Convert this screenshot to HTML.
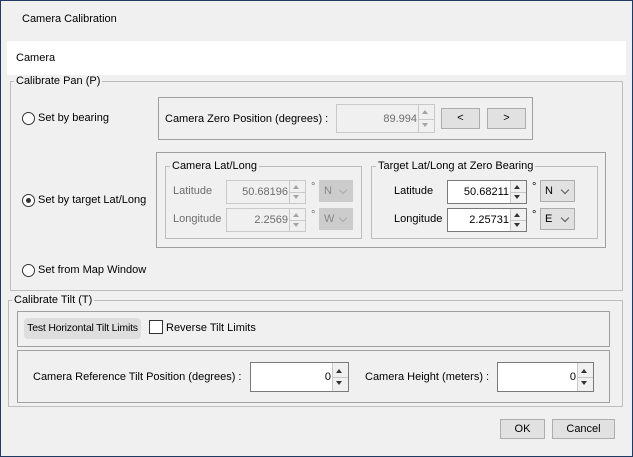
<!DOCTYPE html><html><head><style>
body{margin:0;width:633px;height:457px;background:#f0f0f0;font-family:"Liberation Sans",sans-serif;font-size:11px;color:#000;position:relative;overflow:hidden}
.a{position:absolute}
.b{position:absolute;border:1px solid #a0a0a0;box-sizing:border-box}
.g{position:absolute;border:1px solid #bdbdbd;box-sizing:border-box}
.lg{position:absolute;background:#f0f0f0;padding:0 2px;line-height:12px}
.t{position:absolute;line-height:13px;white-space:nowrap}
.sp{position:absolute;box-sizing:border-box;border:1px solid #7a7a7a;background:#fff;text-align:right}
.sp.d{border-color:#c8c8c8;background:#f0f0f0;color:#6d6d6d}
.sp .v{position:absolute;right:17px;top:0;bottom:0;display:flex;align-items:center}
.sp .ar{position:absolute;right:0;top:0;width:15px;bottom:0;border-left:1px solid #c8c8c8;background:#f0f0f0}
.ar i{position:absolute;left:3px;width:0;height:0;border-left:3px solid transparent;border-right:3px solid transparent}
.ar .u{top:27%;border-bottom:4px solid #333;margin-top:-2px}
.ar .dn{bottom:27%;border-top:4px solid #333;margin-bottom:-2px}
.sp.d .ar i{opacity:.4}
.ar .mid{position:absolute;left:0;right:0;top:50%;border-top:1px solid #c8c8c8}
.cb{position:absolute;box-sizing:border-box;border:1px solid #adadad;background:#e1e1e1;padding-left:4px;line-height:20px}
.cb.d{border-color:#ccc;background:#ccc;color:#888}
.cb:after{content:"";position:absolute;right:6px;top:6px;width:5px;height:5px;border-right:1px solid #555;border-bottom:1px solid #555;transform:rotate(45deg)}
.cb.d:after{border-color:#aaa}
.btn{position:absolute;box-sizing:border-box;border:1px solid #adadad;background:#e1e1e1;text-align:center}
.rd{position:absolute;width:13px;height:13px;border:1px solid #333;border-radius:50%;box-sizing:border-box;background:#fff}
</style></head><body>
<div class="a" style="inset:0;border:1px solid #1f3b63"></div>
<div class="t" style="left:22px;top:13px">Camera Calibration</div>
<div class="a" style="left:7px;top:41px;width:619px;height:34px;background:#fff"></div>
<div class="t" style="left:16px;top:52px">Camera</div>

<div class="g" style="left:10px;top:81px;width:613px;height:210px"></div>
<div class="lg" style="left:14px;top:75px">Calibrate Pan (P)</div>
<div class="rd" style="left:22px;top:112px"></div><div class="t" style="left:38px;top:112px">Set by bearing</div>
<div class="b" style="left:158px;top:97px;width:375px;height:43px"></div>
<div class="t" style="left:165px;top:113px">Camera Zero Position (degrees) :</div>
<div class="sp d" style="left:336px;top:104px;width:99px;height:29px"><span class="v">89.994</span><div class="ar"><i class="u"></i><div class="mid"></div><i class="dn"></i></div></div>
<div class="btn" style="left:441px;top:108px;width:39px;height:21px;line-height:19px">&lt;</div>
<div class="btn" style="left:487px;top:108px;width:39px;height:21px;line-height:19px">&gt;</div>

<div class="rd" style="left:22px;top:194px;border-color:#333"><div class="a" style="left:3px;top:3px;width:5px;height:5px;border-radius:50%;background:#333"></div></div>
<div class="t" style="left:38px;top:194px">Set by target Lat/Long</div>
<div class="b" style="left:156px;top:152px;width:450px;height:96px"></div>
<div class="g" style="left:165px;top:166px;width:197px;height:73px"></div>
<div class="lg" style="left:170px;top:160px">Camera Lat/Long</div>
<div class="t" style="left:173px;top:185px;color:#6d6d6d">Latitude</div>
<div class="sp d" style="left:226px;top:180px;width:80px;height:24px"><span class="v">50.68196</span><div class="ar"><i class="u"></i><div class="mid"></div><i class="dn"></i></div></div>
<div class="t" style="left:311px;top:181px;color:#6d6d6d">°</div>
<div class="cb d" style="left:319px;top:180px;width:34px;height:22px">N</div>
<div class="t" style="left:173px;top:213px;color:#6d6d6d">Longitude</div>
<div class="sp d" style="left:226px;top:208px;width:80px;height:24px"><span class="v">2.2569</span><div class="ar"><i class="u"></i><div class="mid"></div><i class="dn"></i></div></div>
<div class="t" style="left:311px;top:209px;color:#6d6d6d">°</div>
<div class="cb d" style="left:319px;top:208px;width:34px;height:22px">W</div>

<div class="g" style="left:371px;top:166px;width:227px;height:73px"></div>
<div class="lg" style="left:376px;top:160px">Target Lat/Long at Zero Bearing</div>
<div class="t" style="left:394px;top:185px">Latitude</div>
<div class="sp" style="left:447px;top:180px;width:80px;height:24px"><span class="v">50.68211</span><div class="ar"><i class="u"></i><div class="mid"></div><i class="dn"></i></div></div>
<div class="t" style="left:532px;top:181px">°</div>
<div class="cb" style="left:540px;top:180px;width:35px;height:22px">N</div>
<div class="t" style="left:394px;top:213px">Longitude</div>
<div class="sp" style="left:447px;top:208px;width:80px;height:24px"><span class="v">2.25731</span><div class="ar"><i class="u"></i><div class="mid"></div><i class="dn"></i></div></div>
<div class="t" style="left:532px;top:209px">°</div>
<div class="cb" style="left:540px;top:208px;width:35px;height:22px">E</div>

<div class="rd" style="left:22px;top:264px"></div><div class="t" style="left:38px;top:264px">Set from Map Window</div>

<div class="g" style="left:8px;top:300px;width:615px;height:107px"></div>
<div class="lg" style="left:12px;top:294px">Calibrate Tilt (T)</div>
<div class="b" style="left:17px;top:311px;width:593px;height:36px"></div>
<div class="a" style="left:24px;top:318px;width:117px;height:21px;background:#dedede;border-radius:4px;text-align:center;line-height:21px;white-space:nowrap;font-size:10.5px;letter-spacing:-0.2px">Test Horizontal Tilt Limits</div>
<div class="a" style="left:149px;top:320px;width:14px;height:14px;border:1px solid #333;box-sizing:border-box;background:#fff"></div>
<div class="t" style="left:166px;top:322px">Reverse Tilt Limits</div>
<div class="b" style="left:17px;top:350px;width:593px;height:53px"></div>
<div class="t" style="left:33px;top:371px">Camera Reference Tilt Position (degrees) :</div>
<div class="sp" style="left:250px;top:362px;width:99px;height:30px"><span class="v">0</span><div class="ar"><i class="u"></i><div class="mid"></div><i class="dn"></i></div></div>
<div class="t" style="left:365px;top:371px">Camera Height (meters) :</div>
<div class="sp" style="left:497px;top:362px;width:97px;height:30px"><span class="v">0</span><div class="ar"><i class="u"></i><div class="mid"></div><i class="dn"></i></div></div>

<div class="btn" style="left:500px;top:419px;width:45px;height:20px;line-height:18px">OK</div>
<div class="btn" style="left:552px;top:419px;width:63px;height:20px;line-height:18px">Cancel</div>
</body></html>
